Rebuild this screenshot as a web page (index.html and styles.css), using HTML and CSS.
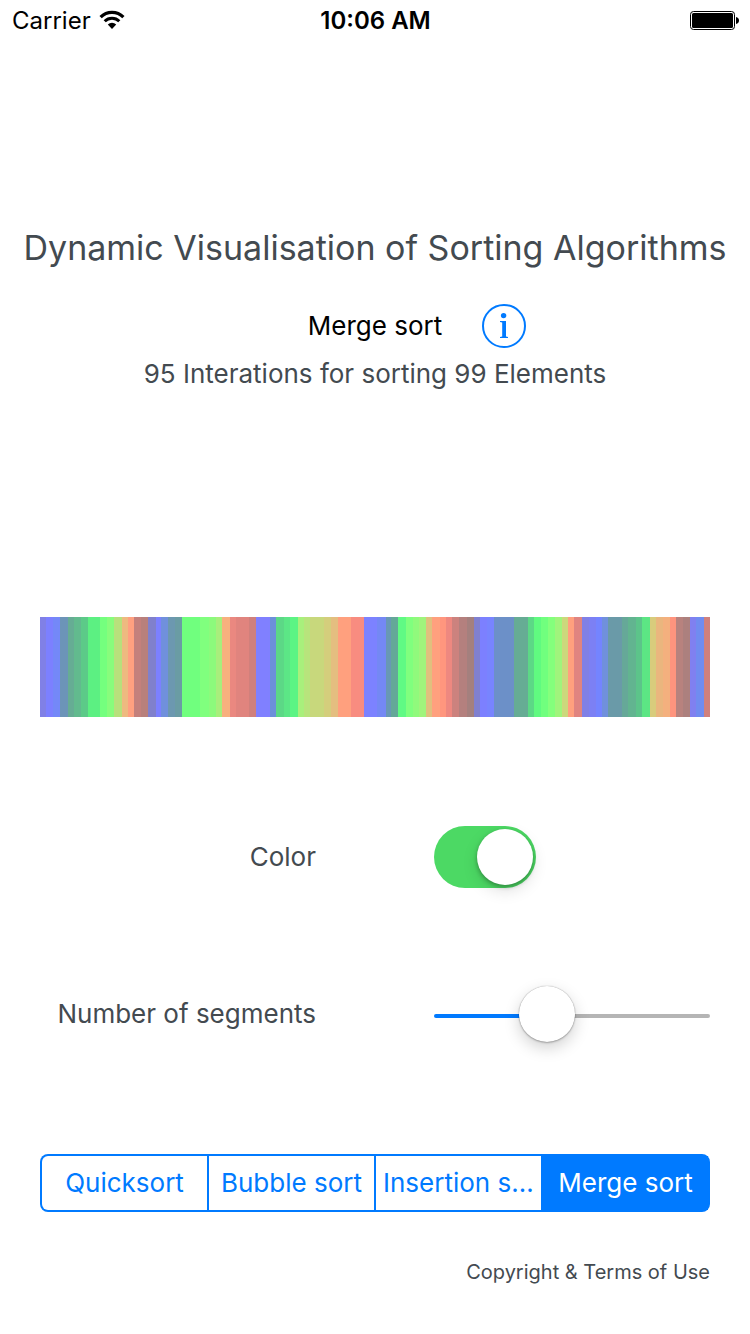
FILE: index.html
```html
<!DOCTYPE html>
<html lang="en">
<head>
<meta charset="utf-8">
<meta name="viewport" content="width=device-width, initial-scale=1">
<title>Dynamic Visualisation of Sorting Algorithms</title>
<link rel="stylesheet" href="styles.css">
</head>
<body>
<header class="status">
  <div class="status-carrier">
    <span>Carrier</span>
    <svg class="wifi" viewBox="0 0 26 20" width="26" height="20" aria-hidden="true">
      <path d="M1.6 7.1a16.2 16.2 0 0 1 22.8 0" fill="none" stroke="#000" stroke-width="3.2"/>
      <path d="M5.7 11.2a10.4 10.4 0 0 1 14.6 0" fill="none" stroke="#000" stroke-width="3"/>
      <path d="M8.8 14.4a6 6 0 0 1 8.4 0L13 18.9z"/>
    </svg>
  </div>
  <time class="status-time">10:06 AM</time>
  <svg class="battery" viewBox="0 0 49 20" width="49" height="20" role="img" aria-label="Battery full">
    <rect x=".5" y=".5" width="44" height="18" rx="3" fill="none" stroke="#000"/>
    <rect x="2" y="2" width="41" height="15" rx="1.5"/>
    <path d="M46 6c4 .5 4 6.500 0 7z"/>
  </svg>
</header>

<main class="page">
  <h1 class="title">Dynamic Visualisation of Sorting Algorithms</h1>

  <div class="algorithm">
    <h2 class="algorithm-name">Merge sort</h2>
    <button class="info" type="button" aria-label="About this algorithm">
      <svg viewBox="0 0 44 44" width="44" height="44" aria-hidden="true">
        <circle cx="22" cy="22" r="21" fill="none" stroke="currentColor" stroke-width="2"/>
        <circle cx="21.600" cy="11.600" r="2.700" fill="currentColor"/>
        <path d="M18 17h6v15.500l2 .5v1h-8v-1l2.200-.5V18.500L18 18z" fill="currentColor"/>
      </svg>
    </button>
  </div>
  <p class="summary">95 Interations for sorting 99 Elements</p>

  <svg class="bars" id="bars" viewBox="0 0 670 100" preserveAspectRatio="none" shape-rendering="crispEdges" role="img" aria-label="Sorting progress"></svg>

  <div class="settings">
    <label class="setting-label" for="color">Color</label>
    <input class="switch" id="color" type="checkbox" role="switch" checked>
    <label class="setting-label" for="segments">Number of segments</label>
    <input class="slider" id="segments" type="range" min="1" max="256" value="99">
  </div>

  <div class="tabs" role="group" aria-label="Algorithm">
    <button class="tab" type="button">Quicksort</button>
    <button class="tab" type="button">Bubble sort</button>
    <button class="tab" type="button">Insertion sort</button>
    <button class="tab tab-active" type="button" aria-pressed="true">Merge sort</button>
  </div>

  <footer class="footer"><a class="legal" href="#terms">Copyright &amp; Terms of Use</a></footer>
</main>
<script src="bars.js"></script>
</body>
</html>
```

FILE: styles.css
```css
* { box-sizing: border-box; }

body {
  margin: 0;
  background: #fff;
  color: #434a50;
  font-family: Inter, "Liberation Sans", sans-serif;
  font-size: 26px;
  line-height: 32px;
}

button {
  margin: 0;
  padding: 0;
  border: 0;
  background: none;
  color: #007aff;
  font: inherit;
}

.status {
  display: grid;
  grid-template-columns: 1fr auto 1fr;
  align-items: center;
  height: 42px;
  padding: 0 11px 0 12px;
  color: #000;
  font-size: 24px;
}

.status-carrier {
  display: flex;
  align-items: center;
  gap: 8px;
}

.wifi { margin-bottom: 2px; }

.status-time { font-weight: 600; }

.battery { justify-self: end; }

.page { padding: 182px 40px 40px; }

.title {
  margin: 0 -30px;
  font-size: 34px;
  font-weight: 400;
  line-height: 48px;
  text-align: center;
}

.algorithm {
  display: grid;
  grid-template-columns: 1fr auto 1fr;
  align-items: center;
  column-gap: 40px;
  margin-top: 32px;
}

.algorithm-name {
  grid-column: 2;
  margin: 0;
  color: #000;
  font-size: 26px;
  font-weight: 400;
}

.info {
  justify-self: start;
  width: 44px;
  height: 44px;
}

.info svg { display: block; }

.summary {
  margin: 10px 0 0;
  text-align: center;
}

.bars {
  display: block;
  width: 100%;
  height: 100px;
  margin-top: 227px;
}

.settings {
  display: grid;
  grid-template-columns: 1fr 1fr;
  align-items: center;
  gap: 94px 118px;
  margin-top: 109px;
}

.setting-label {
  text-align: right;
  white-space: nowrap;
}

.switch {
  appearance: none;
  display: flex;
  align-items: center;
  width: 102px;
  height: 62px;
  margin: 0;
  padding: 3px;
  border-radius: 31px;
  background: #d8d8d8;
}

.switch::before {
  content: "";
  width: 56px;
  height: 56px;
  border-radius: 50%;
  background: #fff;
  box-shadow: 0 2px 4px rgba(0, 0, 0, 0.3), 0 6px 16px rgba(0, 0, 0, 0.12);
}

.switch:checked {
  justify-content: flex-end;
  background: #4cd964;
}

.slider {
  appearance: none;
  width: 100%;
  height: 64px;
  margin: 0;
  padding-top: 4px;
  background: transparent;
}

.slider::-webkit-slider-runnable-track {
  height: 4px;
  border-radius: 2px;
  background: linear-gradient(to right, #007aff 40%, #b5b5b5 40%);
}

.slider::-webkit-slider-thumb {
  appearance: none;
  width: 56px;
  height: 56px;
  margin-top: -28px;
  border-radius: 50%;
  background: #fff;
  box-shadow: 0 0 1px rgba(0, 0, 0, 0.4), 0 1px 2px rgba(0, 0, 0, 0.25), 0 6px 16px rgba(0, 0, 0, 0.18);
}

.tabs {
  display: grid;
  grid-template-columns: repeat(4, minmax(0, 1fr));
  gap: 2px;
  margin-top: 108px;
  padding: 2px;
  border-radius: 8px;
  background: #007aff;
}

.tab {
  height: 54px;
  padding: 0 7px;
  overflow: hidden;
  background: #fff;
  text-overflow: ellipsis;
  white-space: nowrap;
}

.tab:first-child { border-radius: 6px 0 0 6px; }

.tab-active {
  background: #007aff;
  color: #fff;
}

.footer {
  display: flex;
  justify-content: flex-end;
  margin-top: 44px;
}

.legal {
  color: inherit;
  font-size: 20px;
  text-decoration: none;
}
```

FILE: bars.js
```js
// Each run of equal values: [right edge, colour].
const runs = [
  [6, "#8080e6"], [13, "#7c80ff"], [20, "#7488f8"], [28, "#6c94b8"], [34, "#66ac94"],
  [41, "#62ba8e"], [48, "#5cca88"], [60, "#5cf082"], [67, "#74ff7e"], [74, "#88fc7c"],
  [82, "#b8e07c"], [88, "#eeba80"], [94, "#ffa080"], [101, "#c4807c"], [108, "#b8807c"],
  [116, "#8080cc"], [121, "#7c80ff"], [128, "#7090dc"], [135, "#6c98b0"], [142, "#6a9ca4"],
  [160, "#70ff7e"], [169, "#80ff7e"], [176, "#8cfa7c"], [182, "#a8ee7c"], [190, "#f8b07e"],
  [196, "#ea8880"], [209, "#e0847e"], [216, "#d0807c"], [230, "#8080ff"], [236, "#6c90da"],
  [244, "#5cd886"], [250, "#5ce686"], [258, "#5cf484"], [264, "#a8f07c"], [270, "#b8e47c"],
  [284, "#c8d87c"], [291, "#d4ce7c"], [298, "#e4be80"], [311, "#ffa07e"], [324, "#f88c80"],
  [337, "#7c82ff"], [346, "#7488f4"], [351, "#6898b4"], [358, "#64a898"], [366, "#60fa84"],
  [373, "#80ff7e"], [379, "#90fa7c"], [386, "#a0f47c"], [392, "#e0c07e"], [400, "#ffa07e"],
  [406, "#ff967e"], [412, "#ee8880"], [419, "#cc827e"], [427, "#b4807e"], [434, "#a4807e"],
  [440, "#8080d0"], [447, "#7c80ff"], [454, "#7884ff"], [474, "#6c90c8"], [488, "#66ac94"],
  [494, "#5cd886"], [501, "#60fa80"], [508, "#70ff7e"], [515, "#84ff7c"], [522, "#a0f47c"],
  [528, "#ccd87c"], [534, "#ffa07e"], [542, "#e08480"], [549, "#8080e6"], [556, "#7c80f4"],
  [562, "#7484ff"], [568, "#7090dc"], [582, "#6a9aa8"], [588, "#66a898"], [596, "#62b490"],
  [602, "#5cc48a"], [610, "#5ce684"], [616, "#d8cc7c"], [623, "#eab67e"], [630, "#f4b07e"],
  [636, "#ff947e"], [643, "#b8827e"], [650, "#ac807e"], [656, "#8080f0"], [664, "#708cf0"],
  [670, "#d0807c"]
];

const bars = document.getElementById("bars");
let x = 0;
for (const [end, colour] of runs) {
  const rect = document.createElementNS("http://www.w3.org/2000/svg", "rect");
  rect.setAttribute("x", x);
  rect.setAttribute("width", end - x);
  rect.setAttribute("height", 100);
  rect.setAttribute("fill", colour);
  bars.append(rect);
  x = end;
}
```
